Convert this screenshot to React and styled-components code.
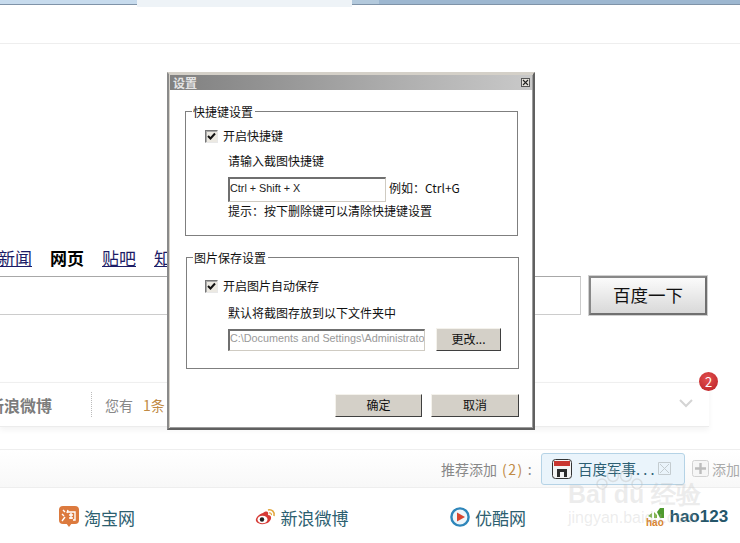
import React from 'react';
import styled, {createGlobalStyle} from "styled-components";

const cjk = `"Noto Sans CJK SC", "Liberation Sans", sans-serif`;

const GlobalStyle = createGlobalStyle`
  html, body {
    margin: 0;
    padding: 0;
    background: #fff;
  }
  body {
    font-family: ${cjk};
  }
`

const Page = styled.div`
  position: relative;
  width: 740px;
  height: 543px;
  overflow: hidden;
  background: #fff;
`

const TabStrip = styled.div`
  display: flex;
  height: 7px;
  align-items: flex-start;
`

const Tab = styled.div`
  width: ${props => props.$w}px;
  flex: ${props => props.$grow ? 1 : 'none'};
  height: ${props => props.$active ? 7 : 4}px;
  background: ${props => props.$color};
  border-bottom: ${props => props.$active ? 'none' : '1px solid #7f93a8'};
`

const Header = styled.div`
  height: 36px;
  border-bottom: 1px solid #eeeeee;
`

const Nav = styled.div`
  display: flex;
  height: 20px;
  margin: 204px 0 0 -2px;
  gap: 18px;
  align-items: center;
  white-space: nowrap;
`

const NavLink = styled.span`
  font-size: 17px;
  line-height: 20px;
  font-weight: ${props => props.$current ? 700 : 400};
  color: ${props => props.$current ? '#000' : '#1c1c66'};
  text-decoration: ${props => props.$current ? 'none' : 'underline'};
  text-underline-offset: 1px;
`

const SearchRow = styled.div`
  display: flex;
  margin-top: 8px;
  height: 39px;
`

const SearchInput = styled.div`
  width: 581px;
  box-sizing: border-box;
  border: 1px solid #cccccc;
  border-top-color: #a8a8a8;
  border-left: none;
`

const SearchButton = styled.button`
  width: 118px;
  height: 39px;
  margin-left: 8px;
  padding: 0 0 3px;
  box-sizing: border-box;
  border: 2px solid #707070;
  border-top-color: #888;
  border-left-color: #888;
  background: linear-gradient(#fbfbfb, #d9d9d9);
  box-shadow: 0 0 0 1px #d0d0d0;
  font-family: ${cjk};
  font-size: 17.5px;
  color: #111;
`

const NoticeCard = styled.div`
  position: relative;
  display: flex;
  align-items: center;
  width: 709px;
  height: 45px;
  margin-top: 67px;
  box-sizing: border-box;
  border-top: 1px solid #efefef;
  border-bottom: 1px solid #ececec;
  background: #fff;
  box-shadow: 0 3px 6px rgba(0, 0, 0, .05);
`

const NoticeSource = styled.div`
  width: 103px;
  margin-left: -12px;
  font-size: 16px;
  font-weight: 700;
  color: #7c7c7c;
  white-space: nowrap;
`

const NoticeDivider = styled.div`
  height: 25px;
  margin-right: 13px;
  border-left: 1px dotted #bbbbbb;
`

const NoticeText = styled.div`
  font-size: 14px;
  color: #888;
  white-space: nowrap;
`

const NoticeCount = styled.span`
  margin-left: 10px;
  color: #c08a45;
`

const Chevron = styled.svg`
  position: absolute;
  right: 16px;
  top: 16px;
`

const Badge = styled.div`
  position: absolute;
  right: -9px;
  top: -11px;
  width: 19px;
  height: 19px;
  border-radius: 50%;
  background: radial-gradient(circle at 45% 35%, #e25050, #b91e22);
  color: #fff;
  font-size: 13px;
  line-height: 19px;
  text-align: center;
`

const RecommendBar = styled.div`
  display: flex;
  align-items: center;
  height: 39px;
  margin-top: 22px;
  padding-left: 441px;
  box-sizing: border-box;
  border-top: 1px solid #eeeeee;
  border-bottom: 1px solid #eeeeee;
  background: linear-gradient(#ffffff, #f8f8f8);
  white-space: nowrap;
`

const RecommendLabel = styled.div`
  width: 100px;
  font-size: 14px;
  color: #888;
`

const RecommendCount = styled.span`
  margin: 0 4px 0 5px;
  letter-spacing: 1.5px;
  color: #c08a45;
`

const Chip = styled.div`
  display: flex;
  align-items: center;
  width: 144px;
  height: 32px;
  box-sizing: border-box;
  padding-left: 10px;
  border: 1px solid #b5d3e6;
  border-radius: 3px;
  background: #eaf4fb;
  font-size: 14.5px;
  color: #2d5f73;
`

const ChipText = styled.span`
  width: 80px;
  margin-left: 6px;
`

const AddButton = styled.div`
  display: flex;
  align-items: center;
  margin-left: 7px;
  gap: 3px;
  font-size: 14px;
  color: #aaa;
`

const Sites = styled.div`
  display: grid;
  grid-template-columns: repeat(4, 195.5px);
  height: 55px;
  padding: 3px 0 0 59px;
  box-sizing: border-box;
  align-items: center;
`

const Site = styled.div`
  display: flex;
  align-items: center;
  gap: 5px;
  font-size: 17px;
  color: #2d6070;
  white-space: nowrap;
`

const HaoLabel = styled.span`
  margin-left: -1px;
  font-family: "Liberation Sans", sans-serif;
  font-weight: 700;
  font-size: 17px;
  color: #25566a;
`

const Watermark = styled.div`
  position: absolute;
  left: 568px;
  top: 470px;
  width: 150px;
  pointer-events: none;
  color: rgba(190, 190, 190, .28);
  font-family: "Liberation Sans", sans-serif;
`

const WatermarkLogo = styled.div`
  font-size: 25px;
  line-height: 28px;
  font-weight: 700;
  margin-top: 10px;
  white-space: nowrap;
`

const WatermarkUrl = styled.div`
  font-size: 16px;
  line-height: 18px;
  margin-top: 1px;
`

const WatermarkPaw = styled.svg`
  position: absolute;
  left: 26px;
  top: -2px;
`

const Dialog = styled.div`
  position: absolute;
  left: 167px;
  top: 72px;
  width: 368px;
  height: 358px;
  box-sizing: border-box;
  padding: 1px;
  border: 2px solid;
  border-color: #d4d0c8 #606060 #606060 #8a8a8a;
  background: #fff;
  box-shadow: inset 1px 1px 0 #d4d0c8, inset -1px -1px 0 #9c9c9c;
  color: #111;
  font-size: 12px;
`

const TitleBar = styled.div`
  display: flex;
  align-items: center;
  justify-content: space-between;
  height: 15px;
  padding: 0 2px 0 3px;
  background: linear-gradient(to right, #808080, #c9c9c9);
  color: #e4e4e4;
  font-size: 12px;
  font-weight: 700;
`

const CloseButton = styled.div`
  display: flex;
  align-items: center;
  justify-content: center;
  width: 9px;
  height: 9px;
  box-sizing: border-box;
  border: 1px solid #555;
  background: #e4e1da;
`

const Group = styled.div`
  position: relative;
  box-sizing: border-box;
  width: 333px;
  height: ${props => props.$height}px;
  margin: ${props => props.$top}px 0 0 ${props => props.$left}px;
  padding: ${props => props.$padTop}px 0 0 ${props => props.$padLeft}px;
  border: 1px solid #7f7f7f;
`

const GroupTitle = styled.div`
  position: absolute;
  left: 6px;
  top: -9px;
  padding: 0 2px 0 1px;
  background: #fff;
  line-height: 17px;
`

const CheckRow = styled.label`
  display: flex;
  align-items: center;
  height: 14px;
  gap: 5px;
  line-height: 14px;
`

const CheckBox = styled.span`
  display: flex;
  align-items: center;
  justify-content: center;
  width: 13px;
  height: 13px;
  box-sizing: border-box;
  border: 1px solid;
  border-color: #777 #e8e8e8 #e8e8e8 #777;
  background: #ece9e2;
  box-shadow: inset 1px 1px 0 #aaa;
`

const Hint = styled.div`
  margin: ${props => props.$top}px 0 0 23px;
  line-height: 14px;
  white-space: nowrap;
`

const FieldRow = styled.div`
  display: flex;
  align-items: center;
  margin: ${props => props.$top}px 0 0 23px;
`

const TextField = styled.div`
  width: ${props => props.$width}px;
  height: ${props => props.$height}px;
  box-sizing: border-box;
  overflow: hidden;
  border: 1px solid;
  border-width: 2px 1px 1px 2px;
  border-color: #6f6f6f #cfcbc2 #cfcbc2 #6f6f6f;
  background: #fff;
  color: ${props => props.$disabled ? '#999' : '#222'};
  font-family: "Liberation Sans", sans-serif;
  font-size: 10.8px;
  line-height: ${props => props.$height - 7}px;
  white-space: nowrap;
`

const Example = styled.span`
  margin: 0 0 4px 3px;
  white-space: nowrap;
`

const DialogButton = styled.div`
  width: ${props => props.$width}px;
  height: ${props => props.$height}px;
  margin-left: ${props => props.$left || 0}px;
  box-sizing: border-box;
  border: 1px solid;
  border-color: #f4f2ec #3f3f3f #3f3f3f #f4f2ec;
  background: #d4d0c8;
  line-height: ${props => props.$height - 4}px;
  text-align: center;
`

const Footer = styled.div`
  display: flex;
  justify-content: flex-end;
  gap: 9px;
  margin: 25px 13px 0 0;
`

const Check = () => (
    <svg width="9" height="9" viewBox="0 0 9 9">
        <path d="M1 4 L3.5 6.5 L8 1.5" fill="none" stroke="#111" strokeWidth="2"/>
    </svg>
);

const TaobaoIcon = () => (
    <svg width="20" height="22" viewBox="0 0 20 22">
        <rect x="0" y="0" width="20" height="18" rx="4" fill="#dc7a3e"/>
        <path d="M7 17 L10 21 L13 17 Z" fill="#dc7a3e"/>
        <path d="M4 4 L6 6 M3 8 L5 10 M3 15 L6 11 M9 4 L8 7 M9 6 H16 V14 L14 14 M10 9 H14 M10 12 H14 M12 7 V13" stroke="#fff" strokeWidth="1.4" fill="none"/>
    </svg>
);

const WeiboIcon = () => (
    <svg width="21" height="18" viewBox="0 0 21 18">
        <path d="M8 5 C12 2 14 4 13 7 C17 7 17 11 14 14 C10 17 3 17 1 13 C0 10 4 6 8 5 Z" fill="#d63a35"/>
        <ellipse cx="7.5" cy="11.5" rx="5" ry="3.8" fill="#fff"/>
        <circle cx="7" cy="11.5" r="2.2" fill="#222"/>
        <path d="M13 2 C17 1 20 4 19 8" stroke="#e2a63c" strokeWidth="1.6" fill="none"/>
        <path d="M14 5 C15.5 4.6 16.8 5.6 16.4 7.2" stroke="#e2a63c" strokeWidth="1.2" fill="none"/>
    </svg>
);

const YoukuIcon = () => (
    <svg width="20" height="20" viewBox="0 0 20 20">
        <circle cx="10" cy="10" r="8.6" fill="#eef6fb" stroke="#2e86ba" strokeWidth="2.4"/>
        <path d="M7 5.5 L15 10 L7 14.5 Z" fill="#d8452e"/>
    </svg>
);

const HaoIcon = () => (
    <svg width="20" height="20" viewBox="0 0 20 20">
        <path d="M2 9 L6 6 L6 11 Z M8 11 V5 L11 8 V11 Z" fill="#7cb342"/>
        <path d="M11 5 L14 1 L18 1 L18 11 L14 11 Z" fill="#4e9a2f"/>
        <text x="0" y="19" fontFamily="Liberation Sans, sans-serif" fontSize="10" fontWeight="700" fill="#d9822b">hao</text>
    </svg>
);

const JunshiIcon = () => (
    <svg width="20" height="20" viewBox="0 0 20 20">
        <rect x="0.5" y="0.5" width="19" height="19" rx="3" fill="#f4f4f4" stroke="#333"/>
        <rect x="2" y="2" width="16" height="5" fill="#c9352f"/>
        <path d="M5 18 V10 H15 V18 H12 V13 H8 V18 Z" fill="#2c2c2c"/>
    </svg>
);

function App() {
    return (
        <Page>
            <GlobalStyle/>
            <TabStrip>
                <Tab $w={137} $color="#c7dbed"/>
                <Tab $w={215} $color="#eef3f7" $active/>
                <Tab $w={27} $color="#b3c9dc"/>
                <Tab $grow $color="#9db7d0"/>
            </TabStrip>
            <Header/>
            <Nav>
                <NavLink>新闻</NavLink>
                <NavLink $current>网页</NavLink>
                <NavLink>贴吧</NavLink>
                <NavLink>知道</NavLink>
                <NavLink>音乐</NavLink>
                <NavLink>图片</NavLink>
                <NavLink>视频</NavLink>
                <NavLink>地图</NavLink>
                <NavLink>文库</NavLink>
                <NavLink>更多&gt;&gt;</NavLink>
            </Nav>
            <SearchRow>
                <SearchInput/>
                <SearchButton>百度一下</SearchButton>
            </SearchRow>
            <NoticeCard>
                <NoticeSource>新浪微博</NoticeSource>
                <NoticeDivider/>
                <NoticeText>您有<NoticeCount>1条</NoticeCount></NoticeText>
                <Chevron width="14" height="9" viewBox="0 0 14 9">
                    <path d="M1 1 L7 7 L13 1" fill="none" stroke="#d4d4d4" strokeWidth="2"/>
                </Chevron>
                <Badge>2</Badge>
            </NoticeCard>
            <RecommendBar>
                <RecommendLabel>推荐添加<RecommendCount>(2)</RecommendCount>:</RecommendLabel>
                <Chip>
                    <JunshiIcon/>
                    <ChipText>百度军事. . .</ChipText>
                    <svg width="13" height="13" viewBox="0 0 13 13">
                        <path d="M.5 .5 H12.5 V12.5 H.5 Z M2 2 L11 11 M11 2 L2 11" fill="none" stroke="#c4ccd0"/>
                    </svg>
                </Chip>
                <AddButton>
                    <svg width="17" height="17" viewBox="0 0 17 17">
                        <rect x=".5" y=".5" width="16" height="16" rx="2" fill="#f6f6f6" stroke="#d2d2d2"/>
                        <path d="M8.5 3 V14 M3 8.5 H14" stroke="#bdbdbd" strokeWidth="2.4"/>
                    </svg>
                    添加
                </AddButton>
            </RecommendBar>
            <Sites>
                <Site><TaobaoIcon/>淘宝网</Site>
                <Site><WeiboIcon/>新浪微博</Site>
                <Site><YoukuIcon/>优酷网</Site>
                <Site><HaoIcon/><HaoLabel>hao123</HaoLabel></Site>
            </Sites>
            <Watermark>
                <WatermarkPaw width="50" height="24" viewBox="0 0 50 24">
                    <g fill="none" stroke="rgba(190,190,190,.4)" strokeWidth="1.5">
                        <circle cx="8" cy="16" r="5"/>
                        <circle cx="19" cy="8" r="5.5"/>
                        <circle cx="32" cy="8" r="5.5"/>
                        <circle cx="43" cy="16" r="5"/>
                    </g>
                </WatermarkPaw>
                <WatermarkLogo>Bai du 经验</WatermarkLogo>
                <WatermarkUrl>jingyan.baidu.com</WatermarkUrl>
            </Watermark>
            <Dialog>
                <TitleBar>
                    设置
                    <CloseButton>
                        <svg width="7" height="7" viewBox="0 0 7 7">
                            <path d="M1 1 L6 6 M6 1 L1 6" stroke="#222" strokeWidth="1.1"/>
                        </svg>
                    </CloseButton>
                </TitleBar>
                <Group $top={21} $left={15} $height={125} $padTop={17} $padLeft={19}>
                    <GroupTitle>快捷键设置</GroupTitle>
                    <CheckRow><CheckBox><Check/></CheckBox>开启快捷键</CheckRow>
                    <Hint $top={11}>请输入截图快捷键</Hint>
                    <FieldRow $top={9}>
                        <TextField $width={158} $height={25}>Ctrl + Shift + X</TextField>
                        <Example>例如：Ctrl+G</Example>
                    </FieldRow>
                    <Hint $top={2}>提示：按下删除键可以清除快捷键设置</Hint>
                </Group>
                <Group $top={21} $left={16} $height={112} $padTop={21} $padLeft={18}>
                    <GroupTitle>图片保存设置</GroupTitle>
                    <CheckRow><CheckBox><Check/></CheckBox>开启图片自动保存</CheckRow>
                    <Hint $top={13}>默认将截图存放到以下文件夹中</Hint>
                    <FieldRow $top={8}>
                        <TextField $width={197} $height={22} $disabled>C:\Documents and Settings\Administrator</TextField>
                        <DialogButton $width={65} $height={23} $left={11}>更改...</DialogButton>
                    </FieldRow>
                </Group>
                <Footer>
                    <DialogButton $width={87} $height={23}>确定</DialogButton>
                    <DialogButton $width={88} $height={23}>取消</DialogButton>
                </Footer>
            </Dialog>
        </Page>
    );
}

export default App;
